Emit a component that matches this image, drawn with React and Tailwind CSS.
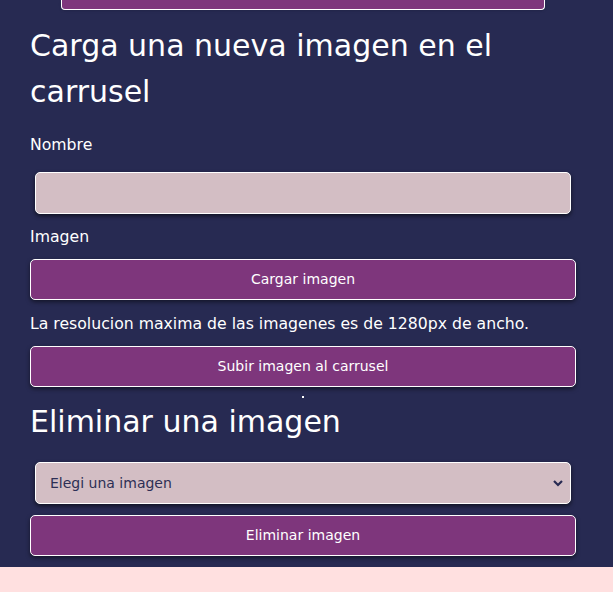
export default function App() {
  const font = { fontFamily: '"DejaVu Sans", "Noto Sans", sans-serif' };
  return (
    <div className="w-[613px] h-[592px] overflow-hidden bg-[#ffe0e0]" style={font}>
      <div className="bg-[#272a52] h-[567px] flex flex-col">
        <div className="ml-[61px] w-[484px] h-[10px] bg-[#7e367c] border border-white border-t-0 rounded-b-[4px] shadow"></div>
        <div className="pl-[30px] w-[576px] flex flex-col">
          <h2 className="text-white text-[30px] leading-[46px] mt-[13px] font-normal">
            Carga una nueva imagen en el carrusel
          </h2>
          <label className="text-white text-[15.7px] leading-[24px] mt-[18px]">Nombre</label>
          <div className="mt-[15px] mx-[5px] h-[42px] rounded-[5px] bg-[#d3bec4] border border-white shadow-[0_2px_4px_rgba(0,0,0,0.6)]"></div>
          <label className="text-white text-[15.7px] leading-[24px] mt-[11px]">Imagen</label>
          <button className="mt-[10px] h-[41px] rounded-[5px] bg-[#7e367c] border border-white text-white text-[14px] shadow-[0_2px_4px_rgba(0,0,0,0.5)]">
            Cargar imagen
          </button>
          <p className="text-white text-[15.7px] leading-[24px] mt-[12px]">
            La resolucion maxima de las imagenes es de 1280px de ancho.
          </p>
          <button className="mt-[10px] h-[41px] rounded-[5px] bg-[#7e367c] border border-white text-white text-[14px] shadow-[0_2px_4px_rgba(0,0,0,0.5)]">
            Subir imagen al carrusel
          </button>
          <div className="relative h-[12px]">
            <div className="absolute left-[272px] top-[9px] w-[2px] h-[2px] bg-white"></div>
          </div>
          <h2 className="text-white text-[30px] leading-[46px] font-normal">Eliminar una imagen</h2>
          <div className="mt-[17px] mx-[5px] h-[42px] rounded-[5px] bg-[#d3bec4] border border-white shadow-[0_2px_4px_rgba(0,0,0,0.6)] flex items-center justify-between pl-[14px] pr-[6px]">
            <span className="text-[#2d2f55] text-[14px]">Elegi una imagen</span>
            <svg width="12" height="12" viewBox="0 0 12 12">
              <path d="M2 4 L6 8 L10 4" stroke="#272a52" strokeWidth="2.2" fill="none" />
            </svg>
          </div>
          <button className="mt-[11px] h-[41px] rounded-[5px] bg-[#7e367c] border border-white text-white text-[14px] shadow-[0_2px_4px_rgba(0,0,0,0.5)]">
            Eliminar imagen
          </button>
        </div>
      </div>
    </div>
  );
}
